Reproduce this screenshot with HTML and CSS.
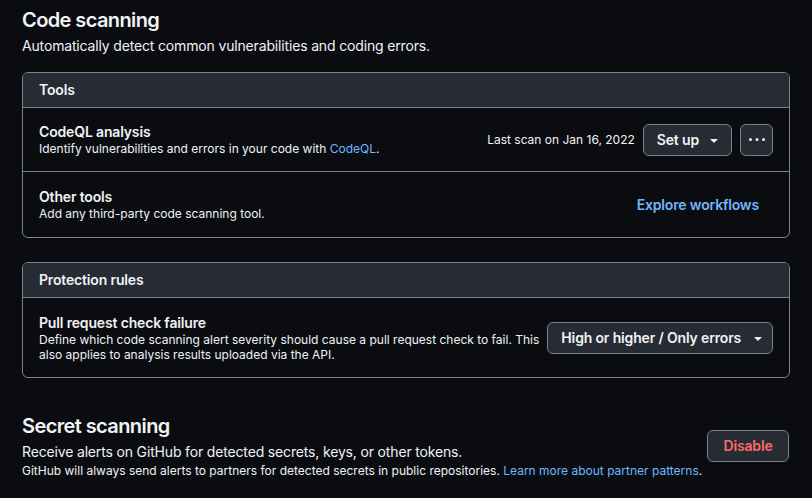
FILE: index.html
```html
<!DOCTYPE html>
<html lang="en">
<head>
<meta charset="utf-8">
<title>Code security</title>
<link rel="stylesheet" href="styles.css">
</head>
<body>
<main class="page">
  <h2 class="section-title">Code scanning</h2>
  <p class="section-desc">Automatically detect common vulnerabilities and coding errors.</p>

  <div class="box">
    <div class="box-header">Tools</div>
    <div class="box-row box-row-first">
      <div class="row-text">
        <div class="row-title">CodeQL analysis</div>
        <div class="row-desc">Identify vulnerabilities and errors in your code with <a class="link" href="#">CodeQL</a>.</div>
      </div>
      <div class="row-actions">
        <span class="meta">Last scan on Jan 16, 2022</span>
        <button class="btn btn-dropdown">Set up
          <svg class="caret" width="16" height="16" viewBox="0 0 16 16"><path d="m4.427 7.427 3.396 3.396a.25.25 0 0 0 .354 0l3.396-3.396A.25.25 0 0 0 11.396 7H4.604a.25.25 0 0 0-.177.427Z"/></svg>
        </button>
        <button class="btn btn-icon" aria-label="More">
          <svg width="16" height="16" viewBox="0 0 16 16"><path d="M8 9a1.5 1.5 0 1 0 0-3 1.5 1.5 0 0 0 0 3ZM1.5 9a1.5 1.5 0 1 0 0-3 1.5 1.5 0 0 0 0 3Zm13 0a1.5 1.5 0 1 0 0-3 1.5 1.5 0 0 0 0 3Z"/></svg>
        </button>
      </div>
    </div>
    <div class="box-row box-row-second">
      <div class="row-text">
        <div class="row-title">Other tools</div>
        <div class="row-desc">Add any third-party code scanning tool.</div>
      </div>
      <div class="row-actions">
        <a class="btn-invisible" href="#">Explore workflows</a>
      </div>
    </div>
  </div>

  <div class="box box-gap">
    <div class="box-header">Protection rules</div>
    <div class="box-row box-row-tall">
      <div class="row-text">
        <div class="row-title">Pull request check failure</div>
        <div class="row-desc row-desc-wrap">Define which code scanning alert severity should cause a pull request check to fail. This<br>also applies to analysis results uploaded via the API.</div>
      </div>
      <div class="row-actions">
        <button class="btn btn-select">High or higher / Only errors
          <svg class="caret" width="16" height="16" viewBox="0 0 16 16"><path d="m4.427 7.427 3.396 3.396a.25.25 0 0 0 .354 0l3.396-3.396A.25.25 0 0 0 11.396 7H4.604a.25.25 0 0 0-.177.427Z"/></svg>
        </button>
      </div>
    </div>
  </div>

  <div class="secret">
    <div class="secret-text">
      <h2 class="section-title">Secret scanning</h2>
      <p class="section-desc">Receive alerts on GitHub for detected secrets, keys, or other tokens.</p>
      <p class="small-note">GitHub will always send alerts to partners for detected secrets in public repositories. <a class="link" href="#">Learn more about partner patterns</a>.</p>
    </div>
    <button class="btn btn-danger">Disable</button>
  </div>
</main>
</body>
</html>
```
FILE: styles.css
```css
* { box-sizing: border-box; }

html, body {
  margin: 0;
  background: #0a0c10;
  color: #f0f3f6;
  font-family: Inter, "Liberation Sans", Arial, sans-serif;
}

.page {
  width: 812px;
  padding: 5px 22px 0 22px;
}

.section-title {
  margin: 0;
  font-size: 20px;
  line-height: 30px;
  font-weight: 600;
  letter-spacing: -0.6px;
}

.section-desc {
  margin: 0;
  font-size: 14px;
  line-height: 21px;
  letter-spacing: -0.16px;
}

.box {
  margin-top: 16px;
  border: 1px solid #7a828e;
  border-radius: 6px;
  overflow: hidden;
}

.box-gap { margin-top: 24px; }

.box-header {
  background: #272b33;
  padding: 7px 16px;
  font-size: 14px;
  line-height: 20px;
  font-weight: 600;
  letter-spacing: -0.16px;
  border-bottom: 1px solid #7a828e;
}

.box-row {
  display: flex;
  align-items: center;
  justify-content: space-between;
  gap: 8px;
  padding: 15px 16px;
  border-top: 1px solid #7a828e;
}

.box-header + .box-row { border-top: 0; }

.box-row-first {
  padding-bottom: 14px;
}

.box-row-second {
  padding-top: 16px;
}

.box-row-tall {
  padding: 16px 16px 15px;
}

.row-title {
  font-size: 14px;
  line-height: 18px;
  font-weight: 600;
  letter-spacing: -0.16px;
}

.row-desc {
  font-size: 12px;
  line-height: 16px;
}

.row-desc-wrap {
  white-space: nowrap;
  line-height: 15px;
}

.link {
  color: #71b7ff;
  text-decoration: none;
}

.row-actions {
  display: flex;
  align-items: center;
  gap: 8px;
  flex-shrink: 0;
}

.meta {
  font-size: 12px;
  line-height: 18px;
}

.btn {
  display: inline-flex;
  align-items: center;
  height: 32px;
  padding: 0 13px;
  background: #272b33;
  color: #f0f3f6;
  border: 1px solid #7a828e;
  border-radius: 6px;
  font-family: inherit;
  font-size: 14px;
  font-weight: 600;
  line-height: 20px;
  letter-spacing: -0.16px;
}

.caret {
  fill: #f0f3f6;
  flex-shrink: 0;
}

.btn-dropdown {
  padding-right: 9px;
}

.btn-dropdown .caret {
  margin-left: 7px;
}

.btn-select {
  padding-right: 6px;
}

.btn-select .caret {
  margin-left: 9px;
}

.btn-icon {
  width: 33px;
  padding: 0;
  justify-content: center;
}

.btn-icon svg { fill: #f0f3f6; }

.btn-invisible {
  color: #71b7ff;
  font-size: 14px;
  font-weight: 600;
  line-height: 20px;
  letter-spacing: -0.16px;
  padding: 6px 14px 6px 12px;
  text-decoration: none;
}

.secret {
  margin-top: 33px;
  display: flex;
  align-items: center;
  justify-content: space-between;
}

.small-note {
  margin: 0;
  font-size: 12px;
  line-height: 18px;
}

.btn-danger {
  color: #ff6a69;
  width: 82px;
  justify-content: center;
  margin-right: 1px;
}
```
